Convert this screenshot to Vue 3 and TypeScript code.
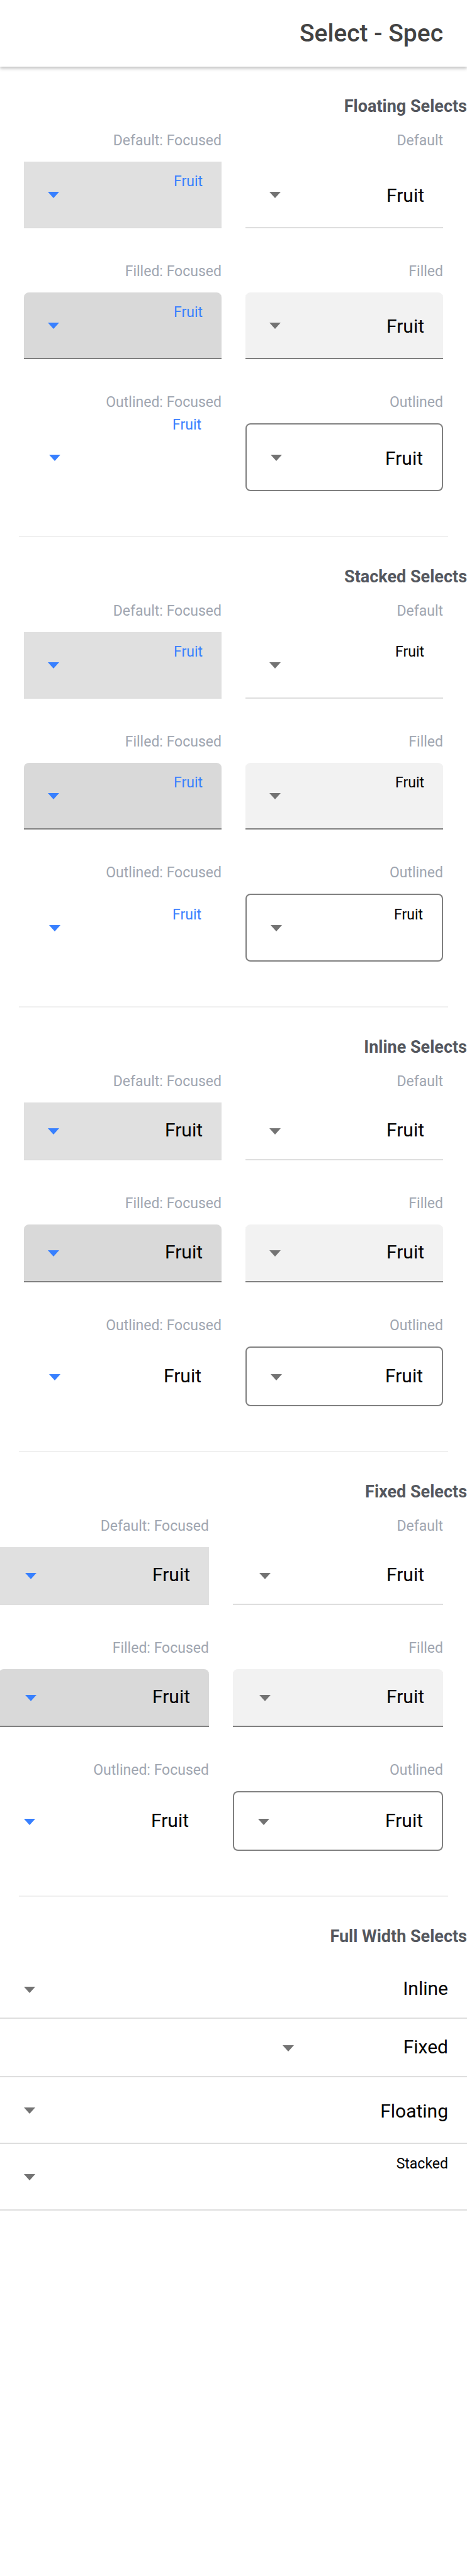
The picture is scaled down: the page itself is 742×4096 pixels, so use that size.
<script setup lang="ts">
type Placement = 'floating' | 'stacked' | 'inline' | 'fixed'
type Fill = 'default' | 'filled' | 'outlined'

interface Variant {
  caption: string
  fill: Fill
  focused: boolean
}

interface Section {
  title: string
  placement: Placement
}

const sections: Section[] = [
  { title: 'Floating Selects', placement: 'floating' },
  { title: 'Stacked Selects', placement: 'stacked' },
  { title: 'Inline Selects', placement: 'inline' },
  { title: 'Fixed Selects', placement: 'fixed' },
]

const variants: Variant[] = [
  { caption: 'Default', fill: 'default', focused: false },
  { caption: 'Default: Focused', fill: 'default', focused: true },
  { caption: 'Filled', fill: 'filled', focused: false },
  { caption: 'Filled: Focused', fill: 'filled', focused: true },
  { caption: 'Outlined', fill: 'outlined', focused: false },
  { caption: 'Outlined: Focused', fill: 'outlined', focused: true },
]

const fullWidth: { label: string; placement: Placement }[] = [
  { label: 'Inline', placement: 'inline' },
  { label: 'Fixed', placement: 'fixed' },
  { label: 'Floating', placement: 'floating' },
  { label: 'Stacked', placement: 'stacked' },
]
</script>

<template>
  <div class="page" dir="rtl">
    <header class="toolbar">
      <h1>Select - Spec</h1>
    </header>
    <main>
      <template v-for="section in sections" :key="section.placement">
        <section>
          <h2>{{ section.title }}</h2>
          <div class="grid" :class="{ 'grid-fixed': section.placement === 'fixed' }">
            <div v-for="(v, i) in variants" :key="v.caption" class="cell">
              <p class="caption">{{ v.caption }}</p>
              <div class="field" :class="[section.placement, v.fill, { focused: v.focused }]">
                <label :for="`${section.placement}-${i}`">Fruit</label>
                <select :id="`${section.placement}-${i}`">
                  <option value=""></option>
                </select>
                <svg class="arrow" viewBox="0 0 18 10" aria-hidden="true"><path d="M0 0h18L9 10z" /></svg>
              </div>
            </div>
          </div>
        </section>
        <hr />
      </template>
      <section>
        <h2 class="full-title">Full Width Selects</h2>
        <div v-for="item in fullWidth" :key="item.label" class="field full default" :class="item.placement">
          <label :for="`full-${item.placement}`">{{ item.label }}</label>
          <select :id="`full-${item.placement}`">
            <option value=""></option>
          </select>
          <svg class="arrow" viewBox="0 0 18 10" aria-hidden="true"><path d="M0 0h18L9 10z" /></svg>
        </div>
      </section>
    </main>
  </div>
</template>

<style>
body {
  margin: 0;
  background: #fff;
}
</style>

<style scoped>
.page {
  min-height: 100vh;
  overflow: hidden;
  background: #fff;
  color: #000;
  font-family: Roboto, sans-serif;
}

.toolbar {
  display: flex;
  align-items: center;
  height: 106px;
  padding: 0 38px;
  box-shadow: 0 4px 5px rgba(0, 0, 0, 0.12), 0 1px 5px rgba(0, 0, 0, 0.2);
}

h1 {
  margin: 0;
  font-size: 39px;
  line-height: 44px;
  font-weight: 500;
  color: #424242;
}

main {
  padding-top: 47px;
}

h2 {
  margin: 0 0 25px;
  font-size: 27px;
  line-height: 32px;
  font-weight: 700;
  color: #54575e;
}

.full-title {
  margin-bottom: 22px;
}

hr {
  height: 2px;
  margin: 71px 30px 47px;
  border: 0;
  background: #f0f0f0;
}

.grid {
  display: grid;
  grid-template-columns: repeat(2, minmax(0, 1fr));
  gap: 55px 38px;
  padding: 0 38px;
}

.grid-fixed {
  grid-template-columns: repeat(2, minmax(334px, 1fr));
}

.caption {
  margin: 0 0 19px;
  font-size: 23px;
  line-height: 28px;
  color: #a0a6b1;
}

.field {
  display: flex;
  align-items: center;
  box-sizing: border-box;
  height: 106px;
  padding: 0 30px 0 38px;
  box-shadow: inset 0 -2px #dedede;
}

.field.inline,
.field.fixed {
  height: 92px;
}

.field.fixed {
  padding-left: 42px;
}

.field label {
  font-size: 30px;
  line-height: 36px;
}

.floating label {
  padding-top: 2px;
}

.inline label,
.fixed label {
  padding-bottom: 4px;
}

.field.stacked label,
.field.floating.focused label {
  align-self: flex-start;
  padding-top: 18px;
  font-size: 23px;
  line-height: 28px;
}

.field select {
  flex: 1;
  min-width: 0;
  height: 48px;
  padding: 0;
  border: 0;
  outline: 0;
  appearance: none;
  background: transparent;
  font: inherit;
  font-size: 30px;
}

.arrow {
  flex: none;
  width: 18px;
  height: 10px;
  fill: #737373;
}

.focused {
  background: #e0e0e0;
}

.focused .arrow {
  fill: #3880ff;
}

.floating.focused label,
.stacked.focused label {
  color: #3880ff;
}

.filled {
  border-radius: 8px 8px 0 0;
  background: #f2f2f2;
  box-shadow: inset 0 -2px #808080;
}

.filled.focused {
  background: #d9d9d9;
}

.field.outlined {
  height: 108px;
  padding: 2px 32px 0 40px;
  border-radius: 8px;
  background: transparent;
  box-shadow: inset 0 0 0 2px #808080;
}

.field.outlined.inline,
.field.outlined.fixed {
  height: 95px;
}

.field.outlined.focused {
  box-shadow: none;
}

.field.outlined.floating.focused label {
  padding-top: 0;
  margin-top: -13px;
}

.field.full {
  padding-left: 38px;
}

.field.full.inline,
.field.full.fixed {
  height: 93px;
}

.field.full.fixed select {
  flex: none;
  width: 174px;
}
</style>
